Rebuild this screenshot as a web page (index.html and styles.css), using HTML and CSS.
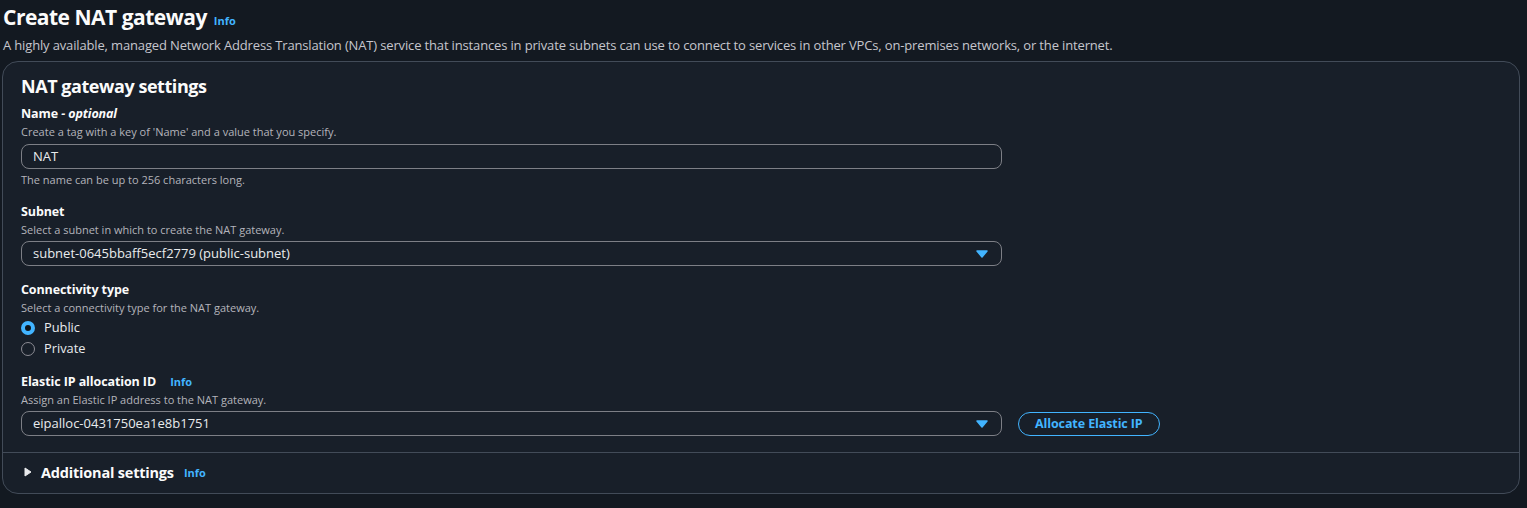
FILE: index.html
```html
<!DOCTYPE html>
<html>
<head>
<meta charset="utf-8">
<link rel="stylesheet" href="styles.css">
</head>
<body>
<div class="page">
  <header class="page-header">
    <h1 class="title">Create NAT gateway <a class="info">Info</a></h1>
    <p class="page-desc">A highly available, managed Network Address Translation (NAT) service that instances in private subnets can use to connect to services in other VPCs, on-premises networks, or the internet.</p>
  </header>
  <section class="card">
    <div class="card-body">
      <h2 class="card-title">NAT gateway settings</h2>

      <div class="field first">
        <div class="label">Name <i>- optional</i></div>
        <div class="desc">Create a tag with a key of 'Name' and a value that you specify.</div>
        <div class="control"><div class="input">NAT</div></div>
        <div class="constraint">The name can be up to 256 characters long.</div>
      </div>

      <div class="field">
        <div class="label">Subnet</div>
        <div class="desc">Select a subnet in which to create the NAT gateway.</div>
        <div class="control tight">
          <div class="input select">subnet-0645bbaff5ecf2779 (public-subnet)
            <svg class="caret" width="12" height="8" viewBox="0 0 12 8"><path d="M1 1h10L6 7z" fill="#42b4ff" stroke="#42b4ff" stroke-width="1.5" stroke-linejoin="round"/></svg>
          </div>
        </div>
      </div>

      <div class="field after-select">
        <div class="label">Connectivity type</div>
        <div class="desc">Select a connectivity type for the NAT gateway.</div>
        <div class="radios">
          <div class="radio"><span class="dot on"></span>Public</div>
          <div class="radio"><span class="dot"></span>Private</div>
        </div>
      </div>

      <div class="field after-radios">
        <div class="label">Elastic IP allocation ID <a class="info">Info</a></div>
        <div class="desc">Assign an Elastic IP address to the NAT gateway.</div>
        <div class="control tight row">
          <div class="input select">eipalloc-0431750ea1e8b1751
            <svg class="caret" width="12" height="8" viewBox="0 0 12 8"><path d="M1 1h10L6 7z" fill="#42b4ff" stroke="#42b4ff" stroke-width="1.5" stroke-linejoin="round"/></svg>
          </div>
          <button class="btn">Allocate Elastic IP</button>
        </div>
      </div>
    </div>
    <div class="expander">
      <svg class="tri" width="8" height="10" viewBox="0 0 8 10"><path d="M1 1v8l6-4z" fill="#e9ebed" stroke="#e9ebed" stroke-linejoin="round"/></svg>
      <span class="exp-title">Additional settings</span>
      <a class="info">Info</a>
    </div>
  </section>
</div>
</body>
</html>
```

FILE: styles.css
```css
* { box-sizing: border-box; }
html, body { margin: 0; padding: 0; }
body {
  background: #131921;
  color: #e9ebed;
  font-family: "Open Sans", "Noto Sans", Arial, sans-serif;
  width: 1527px;
  height: 508px;
  overflow: hidden;
}
.page { padding: 2px 8px 0 2px; }
.page-header { padding-left: 1px; }
.title {
  margin: 0;
  font-size: 21px;
  line-height: 30px;
  font-weight: 700;
  color: #fbfbfb;
  letter-spacing: -0.5px;
}
.info {
  color: #42b4ff;
  font-size: 11px;
  font-weight: 700;
  margin-left: 2px;
  letter-spacing: 0;
}
.page-desc {
  margin: 0;
  font-size: 13px;
  line-height: 18px;
  color: #c6c6cd;
  letter-spacing: -0.15px;
}
.card {
  margin-top: 7px;
  background: #181f29;
  border: 1px solid #424b58;
  border-radius: 16px;
  width: 1518px;
}
.card-body { padding: 12px 18px 16px 18px; }
.card-title {
  margin: 0;
  font-size: 18px;
  line-height: 24px;
  font-weight: 700;
  color: #fbfbfb;
  letter-spacing: -0.45px;
}
.field { margin-top: 15px; }
.field.first { margin-top: 7px; }
.field.after-select { margin-top: 15px; }
.field.after-radios { margin-top: 14px; }
.label {
  font-size: 12.5px;
  line-height: 18px;
  font-weight: 700;
  color: #fbfbfb;
  letter-spacing: -0.1px;
}
.label i { font-weight: 700; }
.label .info { margin-left: 11px; }
.desc, .constraint {
  font-size: 11px;
  line-height: 17px;
  color: #b4b4bb;
}
.constraint { margin-top: 2px; }
.control { margin-top: 4px; }
.control.tight { margin-top: 3px; }
.row { display: flex; align-items: center; gap: 16px; }
.input {
  width: 981px;
  height: 25px;
  border: 1px solid #7d7f86;
  border-radius: 8px;
  padding: 0 11px;
  font-size: 13px;
  line-height: 23px;
  color: #e9ebed;
}
.select { display: flex; align-items: center; justify-content: space-between; padding-right: 13px; }
.caret { display: block; }
.radios { margin-top: 1px; }
.radio {
  display: flex;
  align-items: center;
  font-size: 12.8px;
  line-height: 21px;
  color: #e9ebed;
}
.dot {
  width: 14px;
  height: 14px;
  border-radius: 50%;
  border: 1.5px solid #8c8c94;
  margin-right: 9px;
}
.dot.on {
  border: 4px solid #42b4ff;
  background: #0f141a;
}
.btn {
  height: 24px;
  padding: 0 16px;
  border: 1.5px solid #42b4ff;
  border-radius: 12px;
  background: transparent;
  color: #42b4ff;
  font-family: inherit;
  font-size: 12.5px;
  font-weight: 700;
  letter-spacing: -0.1px;
}
.expander {
  border-top: 1px solid #424b58;
  display: flex;
  align-items: center;
  padding: 0 20px 2px 21px;
  height: 41px;
}
.tri { margin-right: 9px; }
.exp-title {
  font-size: 14.5px;
  font-weight: 700;
  color: #fbfbfb;
  letter-spacing: -0.2px;
}
.expander .info { margin-left: 10px; }
```
